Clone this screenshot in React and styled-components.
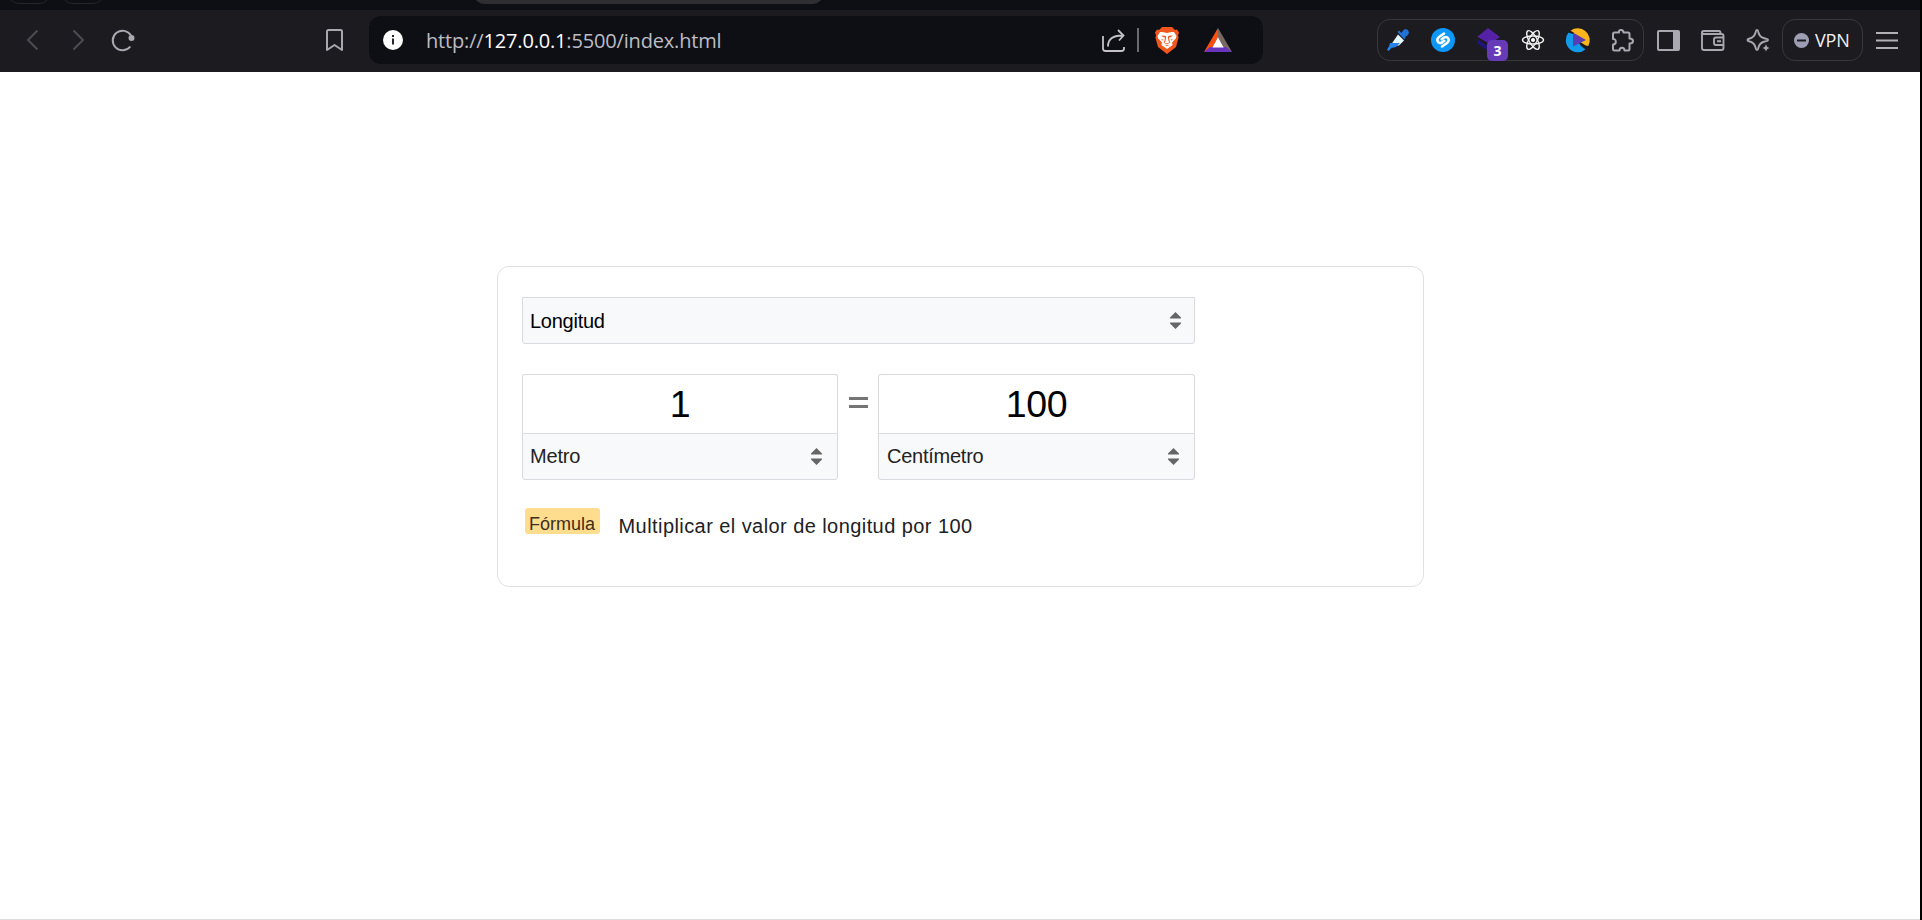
import React from "react";
import styled, { createGlobalStyle } from "styled-components";

const GlobalStyle = createGlobalStyle`
  * { box-sizing: border-box; }
  body { margin: 0; background: #000; }
`;

const Browser = styled.div`
  width: 1920px;
  height: 920px;
  display: flex;
  flex-direction: column;
  background: #fff;
  font-family: "Liberation Sans", Arial, sans-serif;
`;

const TabStrip = styled.div`
  height: 10px;
  flex: none;
  display: flex;
  align-items: flex-end;
  overflow: hidden;
  padding: 0 0 6px 7px;
  background: #0e0f14;
`;

const GhostTab = styled.div`
  width: 44px;
  height: 30px;
  flex: none;
  margin-right: 10px;
  border: 1px solid #25252a;
  border-radius: 12px;
`;

const ActiveTab = styled.div`
  width: 351px;
  height: 30px;
  flex: none;
  margin-left: 358px;
  border-radius: 12px;
  background: #2f2e33;
`;

const Toolbar = styled.div`
  height: 62px;
  flex: none;
  display: flex;
  align-items: center;
  padding: 0 11px 2px 10px;
  background: #1c1b20;
`;

const IconSlot = styled.button`
  width: ${(p) => p.$w || 45}px;
  height: 42px;
  flex: none;
  display: flex;
  align-items: center;
  justify-content: center;
  position: relative;
  margin: 0 0 0 ${(p) => p.$ml || 0}px;
  padding: 0;
  border: 0;
  background: none;
  color: ${(p) => p.$color || "#a9a8b0"};

  svg { display: block; flex: none; overflow: visible; }
`;

const AddressBar = styled.div`
  width: 894px;
  height: 48px;
  flex: none;
  display: flex;
  align-items: center;
  margin-left: 12px;
  padding-left: 14px;
  border-radius: 12px;
  background: #0e0f14;
`;

const Url = styled.span`
  flex: 1;
  margin-left: 23px;
  padding-top: 1px;
  font-family: "Open Sans", "Noto Sans", sans-serif;
  font-size: 20px;
  line-height: 28px;
  letter-spacing: -0.17px;
  white-space: nowrap;
  color: #bcbdc4;

  b { font-weight: 400; color: #fff; }
`;

const Separator = styled.div`
  width: 2px;
  height: 24px;
  margin-left: 1px;
  background: #6a6970;
`;

const Extensions = styled.div`
  width: 267px;
  height: 42px;
  flex: none;
  display: flex;
  align-items: center;
  margin-left: 114px;
  border: 1px solid #38373d;
  border-radius: 13px;
`;

const CountBadge = styled.span`
  position: absolute;
  left: 22px;
  top: 21px;
  width: 21px;
  height: 21px;
  border-radius: 5px;
  background: #673ab7;
  color: #fff;
  font: 700 14px/22px "Open Sans", sans-serif;
  text-align: center;
`;

const VpnButton = styled.button`
  width: 81px;
  height: 42px;
  flex: none;
  display: flex;
  align-items: center;
  gap: 6px;
  margin-left: 1px;
  padding: 0 0 0 11px;
  border: 1px solid #38373d;
  border-radius: 13px;
  background: none;
  color: #f2f2f4;
  font: 400 18px/24px "Open Sans", sans-serif;
  letter-spacing: -0.2px;
`;

const Page = styled.main`
  flex: 1;
  display: flex;
  flex-direction: column;
  align-items: center;
  padding-top: 194px;
  border-bottom: 1px solid #dcdcdc;
`;

const Card = styled.section`
  width: 927px;
  height: 321px;
  display: flex;
  flex-direction: column;
  padding: 30px 24px;
  border: 1px solid #e1e1e3;
  border-radius: 12px;
`;

const Picker = styled.button`
  width: ${(p) => p.$w};
  height: 47px;
  display: flex;
  align-items: center;
  justify-content: space-between;
  margin: 0;
  padding: 0 ${(p) => p.$pr || 13}px 0 ${(p) => p.$pl || 7.5}px;
  border: 1px solid #d9dade;
  border-radius: 0 0 3px 3px;
  background: #f8f9fb;
  color: ${(p) => p.$color || "#222"};
  font: 400 20px/24px "Liberation Sans", Arial, sans-serif;
  letter-spacing: ${(p) => p.$ls || 0}px;
  text-align: left;
`;

const PickerLabel = styled.span`
  padding-bottom: ${(p) => p.$pb || 0}px;
`;

const Conversion = styled.div`
  display: flex;
  margin-top: 30px;
`;

const Unit = styled.div`
  width: ${(p) => p.$w}px;
  display: flex;
  flex-direction: column;
`;

const Amount = styled.input`
  width: 100%;
  height: 59px;
  margin: 0;
  padding: 0 0 0 1px;
  border: 1px solid #d9dade;
  border-bottom: 0;
  border-radius: 3px 3px 0 0;
  outline: 0;
  background: #fff;
  color: #000;
  font: 400 37.5px/44px "Liberation Sans", Arial, sans-serif;
  letter-spacing: -0.4px;
  text-align: center;
`;

const Equals = styled.div`
  width: 40px;
  height: 60px;
  display: flex;
  flex-direction: column;
  align-items: center;
  gap: 5px;
  padding: 23px 0 0 1px;

  &::before, &::after {
    content: "";
    width: 19px;
    height: 3px;
    background: #757575;
  }
`;

const FormulaRow = styled.div`
  display: flex;
  align-items: flex-start;
  margin-top: 28px;
  padding-left: 3px;
`;

const FormulaTag = styled.span`
  width: 75px;
  height: 26px;
  padding-top: 2px;
  border-radius: 3px;
  background: #ffdd8f;
  color: #3c2f1c;
  font-size: 18px;
  line-height: 29px;
  text-align: center;
`;

const FormulaText = styled.span`
  margin-left: 19px;
  padding-top: 5px;
  color: #202124;
  font-size: 20px;
  line-height: 26px;
  letter-spacing: 0.43px;
  white-space: nowrap;
`;

const Icon = ({ w = 24, h = 24, children, ...rest }) => (
  <svg width={w} height={h} viewBox={`0 0 ${w} ${h}`} fill="none" stroke="currentColor" strokeWidth="2" {...rest}>
    {children}
  </svg>
);

const Arrows = () => (
  <Icon w={11} h={17} fill="#666" stroke="none">
    <path d="M5.500 0 11 5.500V6.500H0V5.500zM0 10.500h11v1L5.500 17 0 11.500z" />
  </Icon>
);

const Brave = () => (
  <Icon w={24} h={27} stroke="none">
    <path fill="#f1561d" d="M7 0h10l3 3 2-.4 2 3-1 3 .6 2L21 20l-9 7-9-7L.4 10.600l.6-2-1-3 2-3L4 3z" />
    <path fill="#fff" d="M7.500 5 12 6l4.500-1L19 5l2.500 4-.7 2.500L17 15.500l.6 2.500L12 22l-5.600-4 .6-2.500-3.800-4L2.500 9 5 5z" />
    <path fill="#f1561d" d="m6 8.500 4 .2 1.200 1L10.500 14l-1 1.500 2.500 1 2.500-1-1-1.500-.7-4.300 1.200-1 4-.2-2.500 1.700-1.500.3.600 3.500.8 1.500L12 17.600 8.600 15.500l.8-1.500.6-3.500-1.500-.3zM6.300 12l2.500.7-1.600.8zM17.700 12l-2.500.7 1.600.8zM9.300 19.200 12 17.800l2.700 1.400L12 18.800z" />
  </Icon>
);

const Bat = () => (
  <Icon w={28} h={24} stroke="none">
    <path fill="#ff4f0f" d="M14 0v9L8.500 19 0 24z" />
    <path fill="#796963" d="M14 0v9l5.500 10 8.500 5z" />
    <path fill="#6a35bd" d="m0 24 6-5h16l6 5z" />
    <path fill="#fff" d="m14 9 5.700 10.500H8.300z" />
  </Icon>
);

const Dropper = () => (
  <Icon w={22} h={22} stroke="none">
    <path fill="#2272d6" d="m14.500 4 2-3 2-1 2.500 1 1 2.500-1 2.500-3 2 .7.800-1.500 1.500L10.500 3 12 1.500z" />
    <path fill="#e6f9ff" d="m11 5.500 6 6-5 5H3.500z" />
    <path fill="#2683ea" d="M3 14h10l-4 4-4.500 1-3 3L0 20.500l2-3z" />
  </Icon>
);

const Shazam = () => (
  <Icon stroke="none">
    <circle cx="12" cy="12" r="12" fill="#0b98f8" />
    <path stroke="#fff" strokeWidth="2.600" strokeLinecap="round" d="M13 5.500 8.300 8.800C4.500 11.500 7 16.500 11 14.500L13.300 12.800M11 18.500l4.700-3.300C19.500 12.500 17 7.500 13 9.500L10.700 11.200" />
  </Icon>
);

const Layers = () => (
  <Icon stroke="none">
    <path fill="#20147a" d="m1 11 11 7 11-7v4l-11 8L1 15z" />
    <path fill="#5521a6" d="M12 0 24 9 14 16 1 9z" />
    <path fill="#1c1b20" d="m1 9.500 1-.2L13 16l-.5 1z" />
  </Icon>
);

const ReactLogo = () => (
  <Icon strokeWidth="1.400" stroke="#f2f2f2">
    <ellipse cx="12" cy="12" rx="10.500" ry="4" />
    <ellipse cx="12" cy="12" rx="10.500" ry="4" transform="rotate(60 12 12)" />
    <ellipse cx="12" cy="12" rx="10.500" ry="4" transform="rotate(120 12 12)" />
    <circle cx="12" cy="12" r="2" fill="#fff" stroke="none" />
  </Icon>
);

const Player = () => (
  <Icon stroke="none">
    <path fill="#f9b51b" d="M4.500 2.700A12 12 0 0 1 22.300 18L17 17 7 4.500z" />
    <path fill="#129bea" d="M2.500 4.600A12 12 0 0 0 19.500 21.400L15 18 7 6z" />
    <path stroke="#1c1b20" strokeWidth="1.800" d="m2.500 3.500 5 1.500M15 15.500l6.500 4.500" />
    <path fill="#5b3ab6" d="m7 4.500 13 7.500-13 6.500z" />
  </Icon>
);

export default function App() {
  return (
    <>
      <GlobalStyle />
      <Browser>
        <TabStrip>
          <GhostTab />
          <GhostTab />
          <ActiveTab />
        </TabStrip>
        <Toolbar>
          <IconSlot aria-label="Atrás" $color="#4c4b53">
            <Icon w={11} h={20}><path d="M10.500 0.500 1 10l9.500 9.500" /></Icon>
          </IconSlot>
          <IconSlot aria-label="Adelante" $color="#4c4b53" $ml={1}>
            <Icon w={11} h={20}><path d="M0.500 0.500 10 10 .5 19.500" /></Icon>
          </IconSlot>
          <IconSlot aria-label="Recargar" $ml={-1}>
            <Icon w={22} h={22}>
              <path d="M19 6.500A9.800 9.800 0 1 0 18.300 17.500" />
              <circle cx="19.500" cy="9" r="3" fill="currentColor" stroke="none" />
            </Icon>
          </IconSlot>
          <IconSlot aria-label="Marcador" $ml={167}>
            <Icon w={17} h={22}><path strokeLinejoin="round" d="M1 2.500Q1 1 2.500 1h12Q16 1 16 2.500V21l-7.500-5L1 21z" /></Icon>
          </IconSlot>
          <AddressBar>
            <Icon w={20} h={20} stroke="none">
              <circle cx="10" cy="10" r="10" fill="#fff" />
              <path fill="#25262b" d="M9 5h2v2H9zM9 8.500h2v6H9z" />
            </Icon>
            <Url>http://<b>127.0.0.1</b>:5500/index.html</Url>
            <IconSlot aria-label="Compartir" $color="#c3c2c8">
              <Icon w={23} h={23}>
                <path strokeWidth="1.800" d="M1 7v12.500Q1 22 3.500 22h16q2.500 0 2.500-2.500V18M6 17.500Q6 6.500 20 6.500M16 1l5.500 5.500L17 11.500" />
              </Icon>
            </IconSlot>
            <Separator />
            <IconSlot aria-label="Brave Shields" $w={56}><Brave /></IconSlot>
            <IconSlot aria-label="Brave Rewards" $w={46}><Bat /></IconSlot>
            <IconSlot as="span" $w={22} />
          </AddressBar>
          <Extensions>
            <IconSlot $w={40}><Dropper /></IconSlot>
            <IconSlot $ml={2}><Shazam /></IconSlot>
            <IconSlot><Layers /><CountBadge>3</CountBadge></IconSlot>
            <IconSlot><ReactLogo /></IconSlot>
            <IconSlot><Player /></IconSlot>
            <IconSlot $w={43} $ml={1} aria-label="Extensiones">
              <Icon w={23} h={23}>
                <path strokeWidth="2" strokeLinejoin="round" d="M3.500 3.500H8Q7.500 1 10 1t2.500 2.500H17q1.500 0 1.500 1.500v4.500q3.500 0 3.500 2.500t-3.500 2.500V20q0 1.500-1.500 1.500h-3.500q0-2.800-2.500-2.800t-2.500 2.800H3.500Q2 21.500 2 20v-4.500q2.800 0 2.800-2.800T2 10V5q0-1.500 1.500-1.500z" />
              </Icon>
            </IconSlot>
          </Extensions>
          <IconSlot aria-label="Panel lateral" $ml={2}>
            <Icon w={23} h={21}>
              <rect x="1" y="1" width="21" height="19" rx="1" />
              <path fill="currentColor" stroke="none" d="M16 1h6v19h-6z" />
            </Icon>
          </IconSlot>
          <IconSlot aria-label="Cartera">
            <Icon w={25} h={21}>
              <path strokeWidth="1.900" strokeLinejoin="round" d="M1 3v15q0 2 2 2H20.500q2 0 2-2V6q0-2-2-2H3Q1 4 1 2.500T3 1h15q1.500 0 1.500 2.500M22.500 7.500h-7.500q-2 0-2 2v3.500q0 2 2 2h7.500M16 11.300h4" />
            </Icon>
          </IconSlot>
          <IconSlot aria-label="Asistente">
            <Icon w={23} h={23}>
              <path strokeWidth="1.900" strokeLinejoin="round" d="M10 1q1 0 1.300 2Q12.500 8.500 18 9.500q3 .5 3 1.500t-3 1.500q-5.500 1-6.700 6.500-.3 2-1.300 2t-1.300-2Q7.500 13.500 2 12.300.5 12 .5 11T2 9.700Q7.500 8.500 8.700 3 9 1 10 1z" />
              <path stroke="#1c1b20" fill="currentColor" strokeWidth="1" d="m19 13.500 1.400 4.100L24 19l-3.600 1.400L19 24l-1.400-3.600L14 19l3.600-1.400z" />
            </Icon>
          </IconSlot>
          <VpnButton>
            <Icon w={15} h={15} stroke="none">
              <circle cx="7.500" cy="7.500" r="7.500" fill="#9d9eb4" />
              <path fill="#1c1b20" d="M3 6.500h9v2H3z" />
            </Icon>
            VPN
          </VpnButton>
          <IconSlot aria-label="Menú" $ml={1} $color="#b2b0b2">
            <Icon w={22} h={17}><path d="M0 1h22M0 8.500h22M0 16h22" /></Icon>
          </IconSlot>
        </Toolbar>
        <Page>
          <Card>
            <Picker $w="673px" $color="#000" $ls={-0.25}><PickerLabel>Longitud</PickerLabel><Arrows /></Picker>
            <Conversion>
              <Unit $w={316}>
                <Amount readOnly value="1" />
                <Picker $w="100%" $pr={15} $ls={-0.2}><PickerLabel $pb={2}>Metro</PickerLabel><Arrows /></Picker>
              </Unit>
              <Equals />
              <Unit $w={317}>
                <Amount readOnly value="100" />
                <Picker $w="100%" $pr={15} $pl={8.5} $ls={-0.25}><PickerLabel $pb={2}>Centímetro</PickerLabel><Arrows /></Picker>
              </Unit>
            </Conversion>
            <FormulaRow>
              <FormulaTag>Fórmula</FormulaTag>
              <FormulaText>Multiplicar el valor de longitud por 100</FormulaText>
            </FormulaRow>
          </Card>
        </Page>
      </Browser>
    </>
  );
}
